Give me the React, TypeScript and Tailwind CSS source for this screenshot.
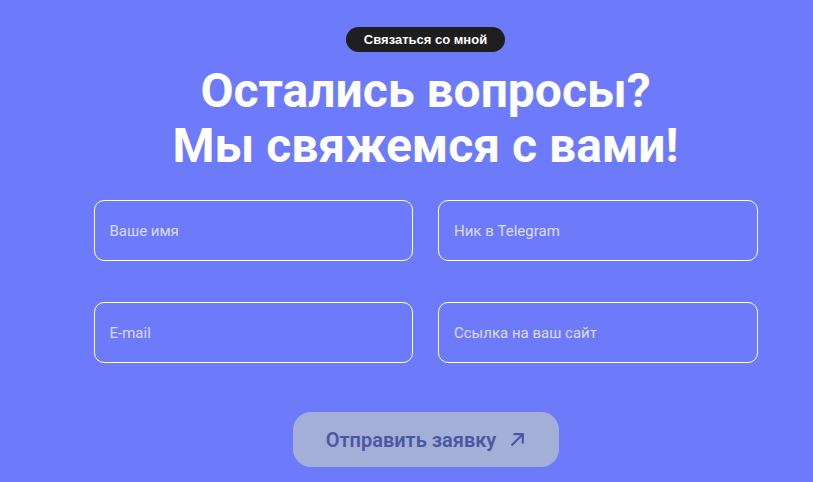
export default function App() {
  return (
    <div className="min-h-screen w-full bg-[#6d7bfb] flex flex-col items-center pl-[38px]" style={{ fontFamily: "Roboto, 'Noto Sans', sans-serif" }}>
      <div className="mt-[27px] h-[25px] px-[18px] rounded-full bg-[#1e1e1e] text-white text-[13px] font-bold flex items-center" style={{ fontFamily: "'Liberation Sans', Arial, sans-serif" }}>
        Связаться со мной
      </div>
      <h1 className="mt-[11px] text-center text-white font-bold text-[48px] leading-[55px]">
        Остались вопросы?
        <br />
        Мы свяжемся с вами!
      </h1>
      <form className="mt-[27px] grid grid-cols-2 gap-x-[25px] gap-y-[41px] w-[664px]">
        {["Ваше имя", "Ник в Telegram", "E-mail", "Ссылка на ваш сайт"].map((p) => (
          <input
            key={p}
            placeholder={p}
            className="h-[61px] w-full rounded-[10px] border border-white bg-transparent px-[15px] text-[15px] text-white placeholder:text-[#dcdcf0] outline-none"
          />
        ))}
      </form>
      <button className="mt-[49px] h-[55px] w-[266px] rounded-[18px] bg-[#a3afd7] text-[#4b56a3] text-[20px] font-semibold flex items-center justify-center gap-[14px]">
        Отправить заявку
        <svg width="15" height="15" viewBox="0 0 14 14" fill="none" stroke="currentColor" strokeWidth="2" strokeLinecap="round" strokeLinejoin="round">
          <path d="M2 12 L12 2" />
          <path d="M4 2 H12 V10" />
        </svg>
      </button>
    </div>
  );
}
